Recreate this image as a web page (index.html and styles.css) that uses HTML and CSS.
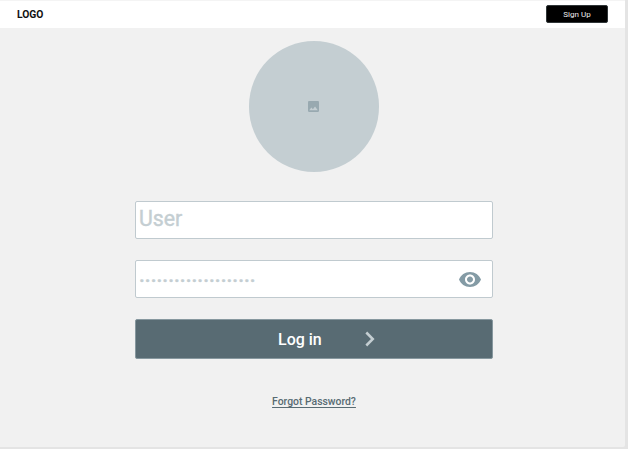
FILE: index.html
```html
<!DOCTYPE html>
<html lang="en">
<head>
<meta charset="utf-8">
<title>Log in</title>
<link rel="stylesheet" href="styles.css">
</head>
<body>
<div class="page">
  <header class="bar">
    <div class="logo">LOGO</div>
    <button class="signup">Sign Up</button>
  </header>
  <main class="login">
    <div class="avatar">
      <svg class="image-icon" viewBox="3 3 18 18"><path d="M21 19V5c0-1.100-.9-2-2-2H5c-1.100 0-2 .9-2 2v14c0 1.100.9 2 2 2h14c1.100 0 2-.9 2-2z"/><path class="hill" d="M5 18l3.500-4.500 2.500 3 3.500-4.500 4.500 6z"/></svg>
    </div>
    <div class="field user"><span>User</span></div>
    <div class="field password">
      <span class="dots">....................</span>
      <svg class="eye" viewBox="1 4.500 22 15"><path d="M12 4.500C7 4.500 2.730 7.610 1 12c1.730 4.390 6 7.500 11 7.500s9.270-3.110 11-7.500c-1.730-4.390-6-7.500-11-7.500zM12 17c-2.760 0-5-2.240-5-5s2.240-5 5-5 5 2.240 5 5-2.240 5-5 5zm0-8c-1.660 0-3 1.340-3 3s1.340 3 3 3 3-1.340 3-3-1.340-3-3-3z"/></svg>
    </div>
    <button class="submit">
      <span>Log in</span>
      <svg class="chevron" viewBox="0 0 10 16"><path d="M1.300 1.500L7.800 8L1.300 14.500"/></svg>
    </button>
    <a class="forgot">Forgot Password?</a>
  </main>
</div>
</body>
</html>
```
FILE: styles.css
```css
* { box-sizing: border-box; }
body {
  margin: 0;
  background: #e4e4e4;
  font-family: Roboto, "Liberation Sans", sans-serif;
}
button { font-family: inherit; padding: 0; }
.page {
  width: 625px;
  height: 447px;
  background: #f1f1f1;
  border-radius: 0 0 2px 0;
}
.bar {
  height: 28px;
  display: flex;
  justify-content: space-between;
  align-items: center;
  padding: 0 17px;
  background: #fff;
  border-top: 1px solid #f4f4f4;
}
.logo {
  font-size: 10.300px;
  font-weight: 700;
  line-height: 12px;
  color: #111;
}
.signup {
  width: 62px;
  height: 18px;
  margin-bottom: 1px;
  border: 1px solid #303638;
  border-radius: 2px;
  background: #000;
  color: #eee;
  font-size: 8px;
  line-height: 14px;
  padding-top: 2px;
}
.login {
  width: 358px;
  margin-left: 135px;
  padding-top: 13px;
  display: flex;
  flex-direction: column;
  align-items: center;
}
.avatar {
  width: 130.500px;
  height: 130.500px;
  border-radius: 50%;
  background: #c4ced2;
  display: flex;
  align-items: center;
  justify-content: center;
  padding: 0.500px 1px 0 0;
}
.image-icon { width: 11px; height: 11px; fill: #98a9b0; }
.hill { fill: #c4ced2; }
.field {
  width: 100%;
  height: 38px;
  display: flex;
  align-items: center;
  justify-content: space-between;
  background: #fff;
  border: 1px solid #c0cacf;
  border-radius: 2px;
  padding: 0 11px 0 3px;
  color: #c4ced2;
  font-size: 21px;
  font-weight: 500;
}
.user {
  margin-top: 29.500px;
  padding-bottom: 3px;
  font-size: 21.300px;
  font-weight: 400;
  -webkit-text-stroke: 0.400px #c4ced2;
}
.password { margin-top: 21px; }
.dots { padding-bottom: 9px; -webkit-text-stroke: 0.400px #c4ced2; }
.eye { width: 22px; height: 15px; fill: #849ba5; }
.submit {
  width: 100%;
  height: 40px;
  margin-top: 21px;
  padding-left: 142px;
  display: flex;
  align-items: center;
  gap: 43px;
  border: 1px solid #87989f;
  border-radius: 2px;
  background: #586b73;
  color: #fff;
  font-size: 16px;
  font-weight: 500;
}
.chevron {
  width: 10px;
  height: 16px;
  fill: none;
  stroke: #c4ced2;
  stroke-width: 2.500;
}
.forgot {
  margin-top: 36px;
  font-size: 10.400px;
  font-weight: 500;
  line-height: 14px;
  color: #586b73;
  text-decoration: underline;
  text-decoration-thickness: 1px;
  text-underline-offset: 2px;
}
```
